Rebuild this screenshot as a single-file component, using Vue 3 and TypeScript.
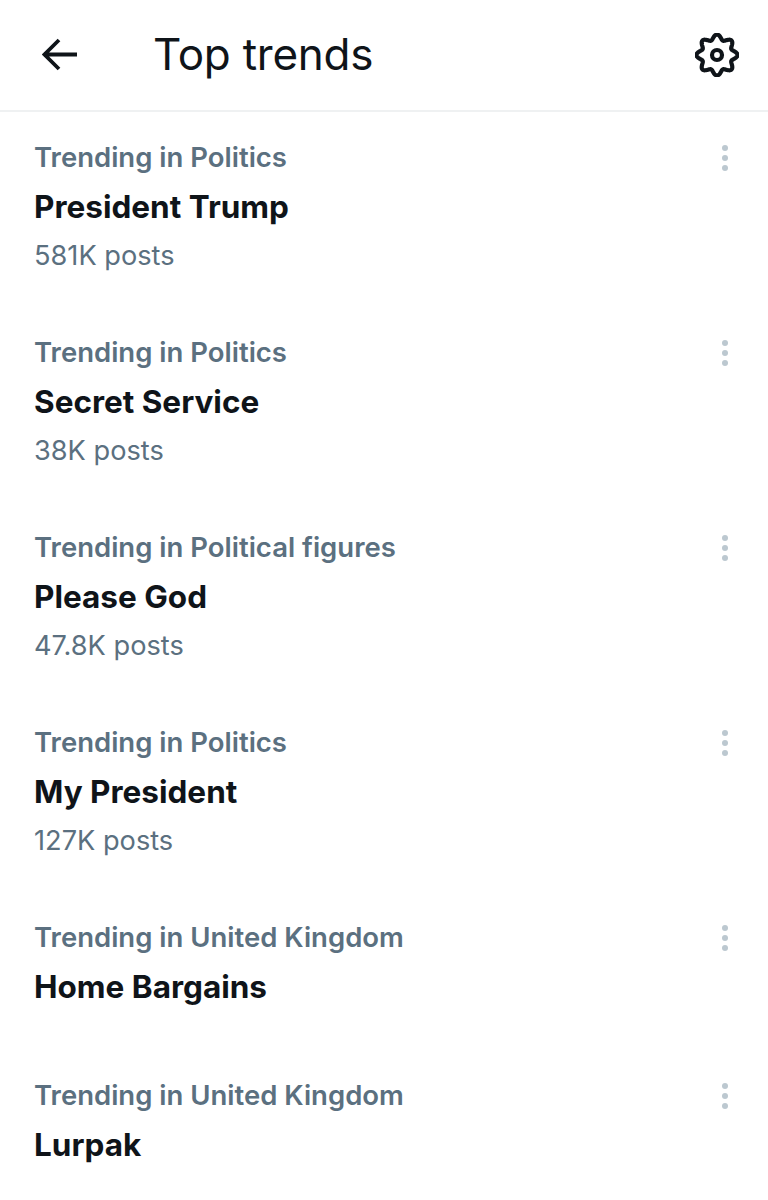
<script setup lang="ts">
interface Trend {
  label: string
  name: string
  posts?: string
}

const trends: Trend[] = [
  { label: 'Trending in Politics', name: 'President Trump', posts: '581K posts' },
  { label: 'Trending in Politics', name: 'Secret Service', posts: '38K posts' },
  { label: 'Trending in Political figures', name: 'Please God', posts: '47.8K posts' },
  { label: 'Trending in Politics', name: 'My President', posts: '127K posts' },
  { label: 'Trending in United Kingdom', name: 'Home Bargains' },
  { label: 'Trending in United Kingdom', name: 'Lurpak' }
]

// wavy outline of the settings gear, 8 lobes
const gearPath = Array.from({ length: 240 }, (_, i) => {
  const t = (i / 240) * Math.PI * 2
  const r = 18 + 2.5 * Math.cos(8 * t)
  const x = 22 + r * Math.sin(t)
  const y = 22 - r * Math.cos(t)
  return `${i === 0 ? 'M' : 'L'}${x.toFixed(2)} ${y.toFixed(2)}`
}).join(' ') + ' Z'
</script>

<template>
  <div class="page">
    <header class="top-bar">
      <svg class="back" width="36" height="36" viewBox="0 0 36 36" fill="none">
        <path d="M17 3 L2.5 17.5 L17 32 M3 17.5 H35" stroke="#0f1419" stroke-width="3.8" />
      </svg>
      <h1 class="title">Top trends</h1>
      <svg class="gear" width="44" height="44" viewBox="0 0 44 44" fill="none">
        <path :d="gearPath" stroke="#0f1419" stroke-width="4.2" stroke-linejoin="round" />
        <circle cx="22" cy="22" r="5" stroke="#0f1419" stroke-width="4.2" />
      </svg>
    </header>
    <section class="list">
      <article v-for="(t, i) in trends" :key="i" class="trend" :class="{ short: !t.posts }">
        <div class="text">
          <div class="label">{{ t.label }}</div>
          <div class="name">{{ t.name }}</div>
          <div v-if="t.posts" class="posts">{{ t.posts }}</div>
        </div>
        <div class="dots">
          <span></span>
          <span></span>
          <span></span>
        </div>
      </article>
    </section>
  </div>
</template>

<style>
body {
  background: #fff;
}
</style>

<style scoped>
.page {
  width: 768px;
  height: 1200px;
  overflow: hidden;
  background: #fff;
  font-family: Inter, "Noto Sans", sans-serif;
}

.top-bar {
  display: flex;
  align-items: center;
  height: 110px;
  padding: 0 29px 0 42px;
  border-bottom: 2px solid #eff1f2;
}

.back {
  flex: none;
}

.title {
  flex: 1;
  margin: 0 0 2px 75px;
  font-size: 44px;
  font-weight: 400;
  line-height: 108px;
  letter-spacing: -0.25px;
  color: #0f1419;
}

.list {
  padding-left: 34px;
}

.trend {
  display: flex;
  justify-content: space-between;
  height: 195px;
  padding-top: 25px;
  padding-right: 40px;
  box-sizing: border-box;
}

.trend.short {
  height: 158px;
}

.label {
  font-size: 27.5px;
  line-height: 40px;
  font-weight: 600;
  color: #5b7080;
}

.name {
  margin-top: 11px;
  font-size: 31.5px;
  line-height: 38px;
  font-weight: 700;
  color: #0f1419;
}

.posts {
  margin-top: 10px;
  font-size: 27.2px;
  line-height: 40px;
  color: #5b7080;
}

.dots {
  display: flex;
  flex-direction: column;
  gap: 4px;
  padding-top: 8px;
}

.dots span {
  width: 6px;
  height: 6px;
  border-radius: 50%;
  background: #bcc8d0;
}
</style>
